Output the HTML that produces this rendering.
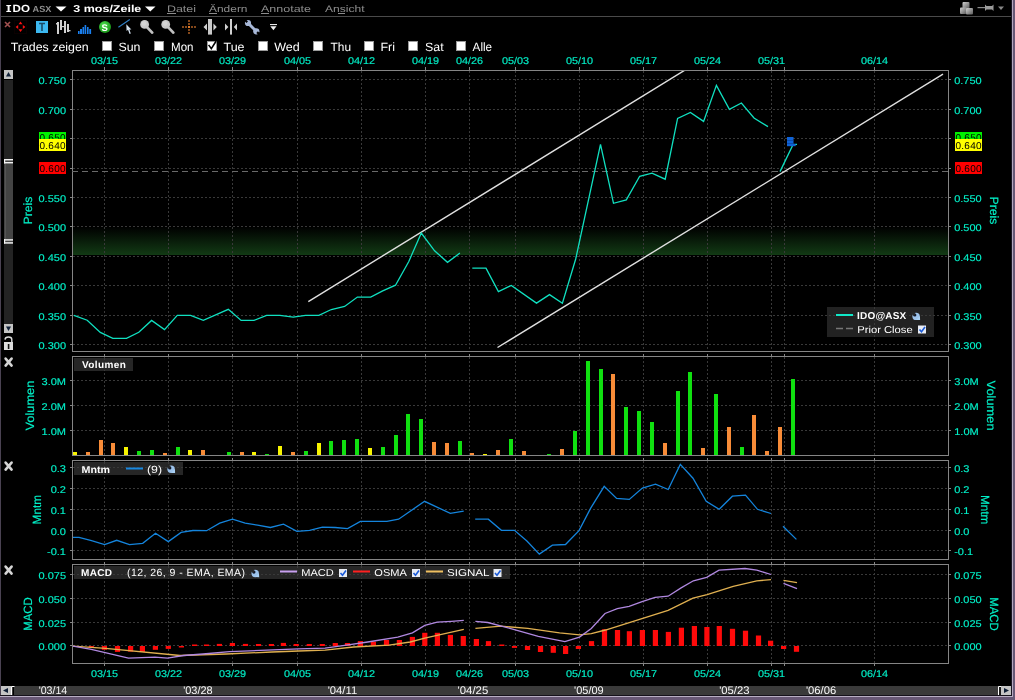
<!DOCTYPE html>
<html><head><meta charset="utf-8"><style>
html,body{margin:0;padding:0;background:#000;width:1015px;height:700px;overflow:hidden}
svg{display:block;will-change:transform}
text{font-family:"Liberation Sans",sans-serif;text-rendering:geometricPrecision}
</style></head><body>
<svg width="1015" height="700" viewBox="0 0 1015 700">
<defs>
<linearGradient id="gzone" x1="0" y1="0" x2="0" y2="1"><stop offset="0" stop-color="#000"/><stop offset="1" stop-color="#123a14"/></linearGradient>
<clipPath id="cpP"><rect x="73" y="71" width="875" height="280"/></clipPath>
<clipPath id="cpV"><rect x="73" y="357" width="875" height="98"/></clipPath>
<clipPath id="cpM"><rect x="73" y="461" width="875" height="98"/></clipPath>
<clipPath id="cpD"><rect x="73" y="565" width="875" height="98"/></clipPath>
</defs>
<rect width="1015" height="700" fill="#000"/>

<rect x="0" y="0" width="1" height="700" fill="#4a4252"/>
<rect x="1011" y="0" width="1" height="700" fill="#1c1622"/>
<rect x="1012" y="0" width="1" height="700" fill="#b4a8c0"/>
<rect x="1013" y="0" width="2" height="700" fill="#685876"/>
<rect x="0" y="695" width="1012" height="1" fill="#16121c"/><rect x="0" y="696" width="1013" height="1" fill="#b8aec4"/>
<rect x="0" y="697" width="1015" height="3" fill="#685876"/>
<rect x="1" y="16" width="1010" height="1" fill="#4a4a4a"/>
<g fill="#fff"><rect x="7.6" y="5" width="2" height="7"/><rect x="6.3" y="5" width="4.8" height="1.1"/><rect x="6.3" y="10.9" width="4.8" height="1.1"/></g>
<text x="12.6" y="12" font-size="10.4" fill="#fff" font-weight="bold" textLength="17.4" lengthAdjust="spacingAndGlyphs" >DO</text>
<text x="32.6" y="12" font-size="8.8" fill="#8e8e8e" font-weight="bold" textLength="18.8" lengthAdjust="spacingAndGlyphs" >ASX</text>
<path d="M55.5,6.5 L66.5,6.5 L61,11.5 Z" fill="#fff"/>
<text x="73.3" y="12" font-size="10" fill="#fff" font-weight="bold" textLength="68" lengthAdjust="spacingAndGlyphs" >3 mos/Zeile</text>
<path d="M145,6.5 L155.5,6.5 L150.25,11.5 Z" fill="#fff"/>
<text x="167" y="12" font-size="9.5" fill="#8c8c8c" textLength="29" lengthAdjust="spacingAndGlyphs" >Datei</text>
<text x="209" y="12" font-size="9.5" fill="#8c8c8c" textLength="38.5" lengthAdjust="spacingAndGlyphs" >Ändern</text>
<text x="261" y="12" font-size="9.5" fill="#8c8c8c" textLength="50" lengthAdjust="spacingAndGlyphs" >Annotate</text>
<text x="325" y="12" font-size="9.5" fill="#8c8c8c" textLength="39.5" lengthAdjust="spacingAndGlyphs" >Ansicht</text>
<rect x="167" y="13" width="9" height="1" fill="#8c8c8c"/>
<rect x="209" y="13" width="8" height="1" fill="#8c8c8c"/>
<rect x="261" y="13" width="8" height="1" fill="#8c8c8c"/>
<rect x="338" y="13" width="7" height="1" fill="#8c8c8c"/>
<path d="M5,22 L10,27 M10,22 L5,27" stroke="#a05050" stroke-width="1.6"/>
<g fill="#ff1010"><path d="M18.5,24.2 L20.5,21.6 L22.5,24.2 Z"/><path d="M18.5,29.3 L20.5,31.9 L22.5,29.3 Z"/><path d="M18.2,25 L15.6,27 L18.2,29 Z"/><path d="M22.8,25 L25.4,27 L22.8,29 Z"/></g>
<rect x="14.5" y="20.5" width="12" height="13" fill="none" stroke="#160303" stroke-width="1" stroke-dasharray="1 1"/>
<rect x="36" y="21" width="12" height="12" fill="#3cb8f0"/><path d="M39,23.5 H45 M42,23.5 V31" stroke="#1a4a66" stroke-width="1.6"/>
<g fill="#d0d0d0"><rect x="57" y="22" width="2" height="12"/><rect x="56" y="23" width="1" height="1.5"/><rect x="60" y="20" width="2" height="10"/><rect x="64" y="21" width="2" height="12"/><rect x="62" y="26" width="2" height="1.2"/><rect x="67" y="24" width="2" height="8"/><rect x="69" y="30" width="1.5" height="1.3"/></g>
<g fill="#1a80f0"><rect x="78" y="31" width="1.6" height="3"/><rect x="80" y="29" width="2" height="5"/><rect x="82.5" y="27" width="1.6" height="7"/><rect x="84.6" y="25" width="1.6" height="9"/><rect x="87" y="27" width="1.6" height="7"/><rect x="89.3" y="29" width="1.8" height="5"/></g>
<defs><radialGradient id="gS" cx="0.4" cy="0.35" r="0.7"><stop offset="0" stop-color="#50e050"/><stop offset="1" stop-color="#149014"/></radialGradient></defs><circle cx="105" cy="27" r="6" fill="url(#gS)"/><text x="101.6" y="30.6" font-size="9.5" font-weight="bold" fill="#fff">S</text>
<path d="M118.4,27.3 L129.8,19.5" stroke="#3080c8" stroke-width="1.1"/><path d="M126.3,24.2 L126.6,31 L128,29.8 L129.6,34 L130.8,33.4 L129.4,29.4 L131.4,29.4 Z" fill="#d4e2f0"/>
<path d="M147.2,27.4 L152.2,32.6" stroke="#c0c0c0" stroke-width="2.8" stroke-linecap="round"/><circle cx="144.6" cy="24.4" r="4.4" fill="#c8c8c8"/><circle cx="144.0" cy="23.6" r="2.4" fill="#d4d4d4"/>
<path d="M168.29999999999998,27.4 L173.29999999999998,32.6" stroke="#c0c0c0" stroke-width="2.8" stroke-linecap="round"/><circle cx="165.7" cy="24.4" r="4.4" fill="#c8c8c8"/><circle cx="165.1" cy="23.6" r="2.4" fill="#d4d4d4"/>
<g fill="#84481a"><rect x="188" y="20" width="2" height="2"/><rect x="188" y="23" width="2" height="2"/><rect x="188" y="29" width="2" height="2"/><rect x="188" y="32" width="2" height="2"/><rect x="182" y="26" width="2" height="2"/><rect x="185" y="26" width="2" height="2"/><rect x="191" y="26" width="2" height="2"/><rect x="194" y="26" width="2" height="2"/><rect x="188" y="26" width="2" height="2" fill="#e07a28"/></g>
<rect x="208" y="19" width="4" height="15.6" fill="#c8c8c8"/><path d="M203.5,27 L207,23.6 L207,30.4 Z M216.8,27 L213.4,23.6 L213.4,30.4 Z" fill="#d0d0d0"/>
<rect x="230" y="19" width="2" height="15.6" fill="#d0d0d0"/><path d="M228.4,27 L225,23.6 L225,30.4 Z M233.8,27 L237,23.6 L237,30.4 Z" fill="#d0d0d0"/>
<g><path d="M248.5,23.5 L255.8,30.8" stroke="#a8b8d8" stroke-width="3"/><circle cx="248" cy="23" r="3.1" fill="#a8b8d8"/><circle cx="256.3" cy="31.3" r="3.1" fill="#a8b8d8"/><path d="M247.2,22.2 L243.5,18.5" stroke="#000" stroke-width="2.2"/><path d="M257.1,32.1 L260.8,35.8" stroke="#000" stroke-width="2.2"/></g>
<rect x="270" y="24" width="7" height="1.1" fill="#e8e8e8"/><path d="M270.3,26.2 L276.5,26.2 L273.4,30.3 Z" fill="#f0f0f0"/>
<defs><linearGradient id="gcube" x1="0" y1="0" x2="1" y2="1"><stop offset="0" stop-color="#d0d0d0"/><stop offset="1" stop-color="#5a5a5a"/></linearGradient></defs>
<g fill="url(#gcube)"><rect x="962.5" y="2" width="7" height="6.5" rx="1"/><rect x="960" y="7.5" width="6.5" height="6.5" rx="1"/><rect x="966" y="8" width="7" height="6.5" rx="1"/></g>
<path d="M977.5,7.6 H985" stroke="#8a8a8a" stroke-width="1.2"/><path d="M985,4.5 L986.5,6 H992 L993.5,4.5 V11 L992,9.5 H986.5 L985,11 Z" fill="#9c9c9c"/>
<path d="M998,6.5 L1004,6.5 L1001,10 Z" fill="#888"/>
<text x="10.7" y="51" font-size="12" fill="#fff" textLength="78" lengthAdjust="spacingAndGlyphs" >Trades zeigen</text>
<rect x="102.5" y="41.5" width="9" height="9" fill="#fff" stroke="#9a9a9a" stroke-width="1"/>
<text x="118.5" y="51" font-size="12" fill="#fff" textLength="22" lengthAdjust="spacingAndGlyphs" >Sun</text>
<rect x="154.5" y="41.5" width="9" height="9" fill="#fff" stroke="#9a9a9a" stroke-width="1"/>
<text x="171" y="51" font-size="12" fill="#fff" textLength="22.5" lengthAdjust="spacingAndGlyphs" >Mon</text>
<rect x="207.5" y="41.5" width="9" height="9" fill="#fff" stroke="#9a9a9a" stroke-width="1"/>
<text x="223.5" y="51" font-size="12" fill="#fff" textLength="21" lengthAdjust="spacingAndGlyphs" >Tue</text>
<rect x="258.5" y="41.5" width="9" height="9" fill="#fff" stroke="#9a9a9a" stroke-width="1"/>
<text x="274.3" y="51" font-size="12" fill="#fff" textLength="25.5" lengthAdjust="spacingAndGlyphs" >Wed</text>
<rect x="313.5" y="41.5" width="9" height="9" fill="#fff" stroke="#9a9a9a" stroke-width="1"/>
<text x="330.5" y="51" font-size="12" fill="#fff" textLength="20.5" lengthAdjust="spacingAndGlyphs" >Thu</text>
<rect x="364.5" y="41.5" width="9" height="9" fill="#fff" stroke="#9a9a9a" stroke-width="1"/>
<text x="380.5" y="51" font-size="12" fill="#fff" textLength="14.5" lengthAdjust="spacingAndGlyphs" >Fri</text>
<rect x="408.5" y="41.5" width="9" height="9" fill="#fff" stroke="#9a9a9a" stroke-width="1"/>
<text x="425" y="51" font-size="12" fill="#fff" textLength="18.6" lengthAdjust="spacingAndGlyphs" >Sat</text>
<rect x="456.5" y="41.5" width="9" height="9" fill="#fff" stroke="#9a9a9a" stroke-width="1"/>
<text x="472.6" y="51" font-size="12" fill="#fff" textLength="19.5" lengthAdjust="spacingAndGlyphs" >Alle</text>
<path d="M208.6,44.9 L211.3,48.6 L216.2,41" stroke="#000" stroke-width="1.6" fill="none"/>
<text x="104.5" y="64.4" font-size="9.8" fill="#00f0c8" textLength="27.2" lengthAdjust="spacingAndGlyphs" text-anchor="middle" stroke="#00f0c8" stroke-width="0.15" stroke-linejoin="round">03/15</text>
<text x="104.5" y="677" font-size="9.8" fill="#00f0c8" textLength="27.2" lengthAdjust="spacingAndGlyphs" text-anchor="middle" stroke="#00f0c8" stroke-width="0.15" stroke-linejoin="round">03/15</text>
<text x="168.5" y="64.4" font-size="9.8" fill="#00f0c8" textLength="27.2" lengthAdjust="spacingAndGlyphs" text-anchor="middle" stroke="#00f0c8" stroke-width="0.15" stroke-linejoin="round">03/22</text>
<text x="168.5" y="677" font-size="9.8" fill="#00f0c8" textLength="27.2" lengthAdjust="spacingAndGlyphs" text-anchor="middle" stroke="#00f0c8" stroke-width="0.15" stroke-linejoin="round">03/22</text>
<text x="232.5" y="64.4" font-size="9.8" fill="#00f0c8" textLength="27.2" lengthAdjust="spacingAndGlyphs" text-anchor="middle" stroke="#00f0c8" stroke-width="0.15" stroke-linejoin="round">03/29</text>
<text x="232.5" y="677" font-size="9.8" fill="#00f0c8" textLength="27.2" lengthAdjust="spacingAndGlyphs" text-anchor="middle" stroke="#00f0c8" stroke-width="0.15" stroke-linejoin="round">03/29</text>
<text x="297.5" y="64.4" font-size="9.8" fill="#00f0c8" textLength="27.2" lengthAdjust="spacingAndGlyphs" text-anchor="middle" stroke="#00f0c8" stroke-width="0.15" stroke-linejoin="round">04/05</text>
<text x="297.5" y="677" font-size="9.8" fill="#00f0c8" textLength="27.2" lengthAdjust="spacingAndGlyphs" text-anchor="middle" stroke="#00f0c8" stroke-width="0.15" stroke-linejoin="round">04/05</text>
<text x="361.5" y="64.4" font-size="9.8" fill="#00f0c8" textLength="27.2" lengthAdjust="spacingAndGlyphs" text-anchor="middle" stroke="#00f0c8" stroke-width="0.15" stroke-linejoin="round">04/12</text>
<text x="361.5" y="677" font-size="9.8" fill="#00f0c8" textLength="27.2" lengthAdjust="spacingAndGlyphs" text-anchor="middle" stroke="#00f0c8" stroke-width="0.15" stroke-linejoin="round">04/12</text>
<text x="425.5" y="64.4" font-size="9.8" fill="#00f0c8" textLength="27.2" lengthAdjust="spacingAndGlyphs" text-anchor="middle" stroke="#00f0c8" stroke-width="0.15" stroke-linejoin="round">04/19</text>
<text x="425.5" y="677" font-size="9.8" fill="#00f0c8" textLength="27.2" lengthAdjust="spacingAndGlyphs" text-anchor="middle" stroke="#00f0c8" stroke-width="0.15" stroke-linejoin="round">04/19</text>
<text x="469.5" y="64.4" font-size="9.8" fill="#00f0c8" textLength="27.2" lengthAdjust="spacingAndGlyphs" text-anchor="middle" stroke="#00f0c8" stroke-width="0.15" stroke-linejoin="round">04/26</text>
<text x="469.5" y="677" font-size="9.8" fill="#00f0c8" textLength="27.2" lengthAdjust="spacingAndGlyphs" text-anchor="middle" stroke="#00f0c8" stroke-width="0.15" stroke-linejoin="round">04/26</text>
<text x="515.5" y="64.4" font-size="9.8" fill="#00f0c8" textLength="27.2" lengthAdjust="spacingAndGlyphs" text-anchor="middle" stroke="#00f0c8" stroke-width="0.15" stroke-linejoin="round">05/03</text>
<text x="515.5" y="677" font-size="9.8" fill="#00f0c8" textLength="27.2" lengthAdjust="spacingAndGlyphs" text-anchor="middle" stroke="#00f0c8" stroke-width="0.15" stroke-linejoin="round">05/03</text>
<text x="579.5" y="64.4" font-size="9.8" fill="#00f0c8" textLength="27.2" lengthAdjust="spacingAndGlyphs" text-anchor="middle" stroke="#00f0c8" stroke-width="0.15" stroke-linejoin="round">05/10</text>
<text x="579.5" y="677" font-size="9.8" fill="#00f0c8" textLength="27.2" lengthAdjust="spacingAndGlyphs" text-anchor="middle" stroke="#00f0c8" stroke-width="0.15" stroke-linejoin="round">05/10</text>
<text x="643.5" y="64.4" font-size="9.8" fill="#00f0c8" textLength="27.2" lengthAdjust="spacingAndGlyphs" text-anchor="middle" stroke="#00f0c8" stroke-width="0.15" stroke-linejoin="round">05/17</text>
<text x="643.5" y="677" font-size="9.8" fill="#00f0c8" textLength="27.2" lengthAdjust="spacingAndGlyphs" text-anchor="middle" stroke="#00f0c8" stroke-width="0.15" stroke-linejoin="round">05/17</text>
<text x="707.5" y="64.4" font-size="9.8" fill="#00f0c8" textLength="27.2" lengthAdjust="spacingAndGlyphs" text-anchor="middle" stroke="#00f0c8" stroke-width="0.15" stroke-linejoin="round">05/24</text>
<text x="707.5" y="677" font-size="9.8" fill="#00f0c8" textLength="27.2" lengthAdjust="spacingAndGlyphs" text-anchor="middle" stroke="#00f0c8" stroke-width="0.15" stroke-linejoin="round">05/24</text>
<text x="771.5" y="64.4" font-size="9.8" fill="#00f0c8" textLength="27.2" lengthAdjust="spacingAndGlyphs" text-anchor="middle" stroke="#00f0c8" stroke-width="0.15" stroke-linejoin="round">05/31</text>
<text x="771.5" y="677" font-size="9.8" fill="#00f0c8" textLength="27.2" lengthAdjust="spacingAndGlyphs" text-anchor="middle" stroke="#00f0c8" stroke-width="0.15" stroke-linejoin="round">05/31</text>
<text x="874.5" y="64.4" font-size="9.8" fill="#00f0c8" textLength="27.2" lengthAdjust="spacingAndGlyphs" text-anchor="middle" stroke="#00f0c8" stroke-width="0.15" stroke-linejoin="round">06/14</text>
<text x="874.5" y="677" font-size="9.8" fill="#00f0c8" textLength="27.2" lengthAdjust="spacingAndGlyphs" text-anchor="middle" stroke="#00f0c8" stroke-width="0.15" stroke-linejoin="round">06/14</text>
<rect x="73" y="227" width="875" height="28" fill="url(#gzone)"/>
<line x1="104.5" y1="71" x2="104.5" y2="351" stroke="#393939" stroke-width="1" stroke-dasharray="2 2"/>
<line x1="168.5" y1="71" x2="168.5" y2="351" stroke="#393939" stroke-width="1" stroke-dasharray="2 2"/>
<line x1="232.5" y1="71" x2="232.5" y2="351" stroke="#393939" stroke-width="1" stroke-dasharray="2 2"/>
<line x1="297.5" y1="71" x2="297.5" y2="351" stroke="#393939" stroke-width="1" stroke-dasharray="2 2"/>
<line x1="361.5" y1="71" x2="361.5" y2="351" stroke="#393939" stroke-width="1" stroke-dasharray="2 2"/>
<line x1="425.5" y1="71" x2="425.5" y2="351" stroke="#393939" stroke-width="1" stroke-dasharray="2 2"/>
<line x1="469.5" y1="71" x2="469.5" y2="351" stroke="#393939" stroke-width="1" stroke-dasharray="2 2"/>
<line x1="515.5" y1="71" x2="515.5" y2="351" stroke="#393939" stroke-width="1" stroke-dasharray="2 2"/>
<line x1="579.5" y1="71" x2="579.5" y2="351" stroke="#393939" stroke-width="1" stroke-dasharray="2 2"/>
<line x1="643.5" y1="71" x2="643.5" y2="351" stroke="#393939" stroke-width="1" stroke-dasharray="2 2"/>
<line x1="707.5" y1="71" x2="707.5" y2="351" stroke="#393939" stroke-width="1" stroke-dasharray="2 2"/>
<line x1="771.5" y1="71" x2="771.5" y2="351" stroke="#393939" stroke-width="1" stroke-dasharray="2 2"/>
<line x1="784.5" y1="71" x2="784.5" y2="351" stroke="#393939" stroke-width="1" stroke-dasharray="2 2"/>
<line x1="874.5" y1="71" x2="874.5" y2="351" stroke="#393939" stroke-width="1" stroke-dasharray="2 2"/>
<line x1="73" y1="79.5" x2="948" y2="79.5" stroke="#393939" stroke-width="1" stroke-dasharray="2 2"/>
<line x1="70" y1="79.5" x2="72" y2="79.5" stroke="#858585"/>
<line x1="949" y1="79.5" x2="951" y2="79.5" stroke="#858585"/>
<text x="66" y="84" font-size="9.8" fill="#00f0c8" textLength="27.5" lengthAdjust="spacingAndGlyphs" text-anchor="end" stroke="#00f0c8" stroke-width="0.15" stroke-linejoin="round">0.750</text>
<text x="954.2" y="84" font-size="9.8" fill="#00f0c8" textLength="27.5" lengthAdjust="spacingAndGlyphs" stroke="#00f0c8" stroke-width="0.15" stroke-linejoin="round">0.750</text>
<line x1="73" y1="109.5" x2="948" y2="109.5" stroke="#393939" stroke-width="1" stroke-dasharray="2 2"/>
<line x1="70" y1="109.5" x2="72" y2="109.5" stroke="#858585"/>
<line x1="949" y1="109.5" x2="951" y2="109.5" stroke="#858585"/>
<text x="66" y="114" font-size="9.8" fill="#00f0c8" textLength="27.5" lengthAdjust="spacingAndGlyphs" text-anchor="end" stroke="#00f0c8" stroke-width="0.15" stroke-linejoin="round">0.700</text>
<text x="954.2" y="114" font-size="9.8" fill="#00f0c8" textLength="27.5" lengthAdjust="spacingAndGlyphs" stroke="#00f0c8" stroke-width="0.15" stroke-linejoin="round">0.700</text>
<line x1="73" y1="138.5" x2="948" y2="138.5" stroke="#393939" stroke-width="1" stroke-dasharray="2 2"/>
<line x1="70" y1="138.5" x2="72" y2="138.5" stroke="#858585"/>
<line x1="949" y1="138.5" x2="951" y2="138.5" stroke="#858585"/>
<line x1="73" y1="168.5" x2="948" y2="168.5" stroke="#393939" stroke-width="1" stroke-dasharray="2 2"/>
<line x1="70" y1="168.5" x2="72" y2="168.5" stroke="#858585"/>
<line x1="949" y1="168.5" x2="951" y2="168.5" stroke="#858585"/>
<line x1="73" y1="197.5" x2="948" y2="197.5" stroke="#393939" stroke-width="1" stroke-dasharray="2 2"/>
<line x1="70" y1="197.5" x2="72" y2="197.5" stroke="#858585"/>
<line x1="949" y1="197.5" x2="951" y2="197.5" stroke="#858585"/>
<text x="66" y="202" font-size="9.8" fill="#00f0c8" textLength="27.5" lengthAdjust="spacingAndGlyphs" text-anchor="end" stroke="#00f0c8" stroke-width="0.15" stroke-linejoin="round">0.550</text>
<text x="954.2" y="202" font-size="9.8" fill="#00f0c8" textLength="27.5" lengthAdjust="spacingAndGlyphs" stroke="#00f0c8" stroke-width="0.15" stroke-linejoin="round">0.550</text>
<line x1="73" y1="226.5" x2="948" y2="226.5" stroke="#393939" stroke-width="1" stroke-dasharray="2 2"/>
<line x1="70" y1="226.5" x2="72" y2="226.5" stroke="#858585"/>
<line x1="949" y1="226.5" x2="951" y2="226.5" stroke="#858585"/>
<text x="66" y="231" font-size="9.8" fill="#00f0c8" textLength="27.5" lengthAdjust="spacingAndGlyphs" text-anchor="end" stroke="#00f0c8" stroke-width="0.15" stroke-linejoin="round">0.500</text>
<text x="954.2" y="231" font-size="9.8" fill="#00f0c8" textLength="27.5" lengthAdjust="spacingAndGlyphs" stroke="#00f0c8" stroke-width="0.15" stroke-linejoin="round">0.500</text>
<line x1="73" y1="256.5" x2="948" y2="256.5" stroke="#393939" stroke-width="1" stroke-dasharray="2 2"/>
<line x1="70" y1="256.5" x2="72" y2="256.5" stroke="#858585"/>
<line x1="949" y1="256.5" x2="951" y2="256.5" stroke="#858585"/>
<text x="66" y="261" font-size="9.8" fill="#00f0c8" textLength="27.5" lengthAdjust="spacingAndGlyphs" text-anchor="end" stroke="#00f0c8" stroke-width="0.15" stroke-linejoin="round">0.450</text>
<text x="954.2" y="261" font-size="9.8" fill="#00f0c8" textLength="27.5" lengthAdjust="spacingAndGlyphs" stroke="#00f0c8" stroke-width="0.15" stroke-linejoin="round">0.450</text>
<line x1="73" y1="285.5" x2="948" y2="285.5" stroke="#393939" stroke-width="1" stroke-dasharray="2 2"/>
<line x1="70" y1="285.5" x2="72" y2="285.5" stroke="#858585"/>
<line x1="949" y1="285.5" x2="951" y2="285.5" stroke="#858585"/>
<text x="66" y="290" font-size="9.8" fill="#00f0c8" textLength="27.5" lengthAdjust="spacingAndGlyphs" text-anchor="end" stroke="#00f0c8" stroke-width="0.15" stroke-linejoin="round">0.400</text>
<text x="954.2" y="290" font-size="9.8" fill="#00f0c8" textLength="27.5" lengthAdjust="spacingAndGlyphs" stroke="#00f0c8" stroke-width="0.15" stroke-linejoin="round">0.400</text>
<line x1="73" y1="315.5" x2="948" y2="315.5" stroke="#393939" stroke-width="1" stroke-dasharray="2 2"/>
<line x1="70" y1="315.5" x2="72" y2="315.5" stroke="#858585"/>
<line x1="949" y1="315.5" x2="951" y2="315.5" stroke="#858585"/>
<text x="66" y="320" font-size="9.8" fill="#00f0c8" textLength="27.5" lengthAdjust="spacingAndGlyphs" text-anchor="end" stroke="#00f0c8" stroke-width="0.15" stroke-linejoin="round">0.350</text>
<text x="954.2" y="320" font-size="9.8" fill="#00f0c8" textLength="27.5" lengthAdjust="spacingAndGlyphs" stroke="#00f0c8" stroke-width="0.15" stroke-linejoin="round">0.350</text>
<line x1="73" y1="344.5" x2="948" y2="344.5" stroke="#393939" stroke-width="1" stroke-dasharray="2 2"/>
<line x1="70" y1="344.5" x2="72" y2="344.5" stroke="#858585"/>
<line x1="949" y1="344.5" x2="951" y2="344.5" stroke="#858585"/>
<text x="66" y="349" font-size="9.8" fill="#00f0c8" textLength="27.5" lengthAdjust="spacingAndGlyphs" text-anchor="end" stroke="#00f0c8" stroke-width="0.15" stroke-linejoin="round">0.300</text>
<text x="954.2" y="349" font-size="9.8" fill="#00f0c8" textLength="27.5" lengthAdjust="spacingAndGlyphs" stroke="#00f0c8" stroke-width="0.15" stroke-linejoin="round">0.300</text>
<rect x="72.5" y="70.5" width="876" height="281" fill="none" stroke="#858585" stroke-width="1"/>
<line x1="104.5" y1="67" x2="104.5" y2="70" stroke="#858585"/>
<line x1="168.5" y1="67" x2="168.5" y2="70" stroke="#858585"/>
<line x1="232.5" y1="67" x2="232.5" y2="70" stroke="#858585"/>
<line x1="297.5" y1="67" x2="297.5" y2="70" stroke="#858585"/>
<line x1="361.5" y1="67" x2="361.5" y2="70" stroke="#858585"/>
<line x1="425.5" y1="67" x2="425.5" y2="70" stroke="#858585"/>
<line x1="469.5" y1="67" x2="469.5" y2="70" stroke="#858585"/>
<line x1="515.5" y1="67" x2="515.5" y2="70" stroke="#858585"/>
<line x1="579.5" y1="67" x2="579.5" y2="70" stroke="#858585"/>
<line x1="643.5" y1="67" x2="643.5" y2="70" stroke="#858585"/>
<line x1="707.5" y1="67" x2="707.5" y2="70" stroke="#858585"/>
<line x1="771.5" y1="67" x2="771.5" y2="70" stroke="#858585"/>
<line x1="784.5" y1="67" x2="784.5" y2="70" stroke="#858585"/>
<line x1="874.5" y1="67" x2="874.5" y2="70" stroke="#858585"/>
<line x1="104.5" y1="357" x2="104.5" y2="455" stroke="#393939" stroke-width="1" stroke-dasharray="2 2"/>
<line x1="168.5" y1="357" x2="168.5" y2="455" stroke="#393939" stroke-width="1" stroke-dasharray="2 2"/>
<line x1="232.5" y1="357" x2="232.5" y2="455" stroke="#393939" stroke-width="1" stroke-dasharray="2 2"/>
<line x1="297.5" y1="357" x2="297.5" y2="455" stroke="#393939" stroke-width="1" stroke-dasharray="2 2"/>
<line x1="361.5" y1="357" x2="361.5" y2="455" stroke="#393939" stroke-width="1" stroke-dasharray="2 2"/>
<line x1="425.5" y1="357" x2="425.5" y2="455" stroke="#393939" stroke-width="1" stroke-dasharray="2 2"/>
<line x1="469.5" y1="357" x2="469.5" y2="455" stroke="#393939" stroke-width="1" stroke-dasharray="2 2"/>
<line x1="515.5" y1="357" x2="515.5" y2="455" stroke="#393939" stroke-width="1" stroke-dasharray="2 2"/>
<line x1="579.5" y1="357" x2="579.5" y2="455" stroke="#393939" stroke-width="1" stroke-dasharray="2 2"/>
<line x1="643.5" y1="357" x2="643.5" y2="455" stroke="#393939" stroke-width="1" stroke-dasharray="2 2"/>
<line x1="707.5" y1="357" x2="707.5" y2="455" stroke="#393939" stroke-width="1" stroke-dasharray="2 2"/>
<line x1="771.5" y1="357" x2="771.5" y2="455" stroke="#393939" stroke-width="1" stroke-dasharray="2 2"/>
<line x1="784.5" y1="357" x2="784.5" y2="455" stroke="#393939" stroke-width="1" stroke-dasharray="2 2"/>
<line x1="874.5" y1="357" x2="874.5" y2="455" stroke="#393939" stroke-width="1" stroke-dasharray="2 2"/>
<line x1="73" y1="380.5" x2="948" y2="380.5" stroke="#393939" stroke-width="1" stroke-dasharray="2 2"/>
<line x1="70" y1="380.5" x2="72" y2="380.5" stroke="#858585"/>
<line x1="949" y1="380.5" x2="951" y2="380.5" stroke="#858585"/>
<text x="66" y="385" font-size="9.8" fill="#00f0c8" textLength="24.5" lengthAdjust="spacingAndGlyphs" text-anchor="end" stroke="#00f0c8" stroke-width="0.15" stroke-linejoin="round">3.0M</text>
<text x="954.2" y="385" font-size="9.8" fill="#00f0c8" textLength="24.5" lengthAdjust="spacingAndGlyphs" stroke="#00f0c8" stroke-width="0.15" stroke-linejoin="round">3.0M</text>
<line x1="73" y1="405.5" x2="948" y2="405.5" stroke="#393939" stroke-width="1" stroke-dasharray="2 2"/>
<line x1="70" y1="405.5" x2="72" y2="405.5" stroke="#858585"/>
<line x1="949" y1="405.5" x2="951" y2="405.5" stroke="#858585"/>
<text x="66" y="410" font-size="9.8" fill="#00f0c8" textLength="24.5" lengthAdjust="spacingAndGlyphs" text-anchor="end" stroke="#00f0c8" stroke-width="0.15" stroke-linejoin="round">2.0M</text>
<text x="954.2" y="410" font-size="9.8" fill="#00f0c8" textLength="24.5" lengthAdjust="spacingAndGlyphs" stroke="#00f0c8" stroke-width="0.15" stroke-linejoin="round">2.0M</text>
<line x1="73" y1="430.5" x2="948" y2="430.5" stroke="#393939" stroke-width="1" stroke-dasharray="2 2"/>
<line x1="70" y1="430.5" x2="72" y2="430.5" stroke="#858585"/>
<line x1="949" y1="430.5" x2="951" y2="430.5" stroke="#858585"/>
<text x="66" y="435" font-size="9.8" fill="#00f0c8" textLength="24.5" lengthAdjust="spacingAndGlyphs" text-anchor="end" stroke="#00f0c8" stroke-width="0.15" stroke-linejoin="round">1.0M</text>
<text x="954.2" y="435" font-size="9.8" fill="#00f0c8" textLength="24.5" lengthAdjust="spacingAndGlyphs" stroke="#00f0c8" stroke-width="0.15" stroke-linejoin="round">1.0M</text>
<rect x="72.5" y="356.5" width="876" height="99" fill="none" stroke="#858585" stroke-width="1"/>
<line x1="104.5" y1="354" x2="104.5" y2="356" stroke="#858585"/>
<line x1="168.5" y1="354" x2="168.5" y2="356" stroke="#858585"/>
<line x1="232.5" y1="354" x2="232.5" y2="356" stroke="#858585"/>
<line x1="297.5" y1="354" x2="297.5" y2="356" stroke="#858585"/>
<line x1="361.5" y1="354" x2="361.5" y2="356" stroke="#858585"/>
<line x1="425.5" y1="354" x2="425.5" y2="356" stroke="#858585"/>
<line x1="469.5" y1="354" x2="469.5" y2="356" stroke="#858585"/>
<line x1="515.5" y1="354" x2="515.5" y2="356" stroke="#858585"/>
<line x1="579.5" y1="354" x2="579.5" y2="356" stroke="#858585"/>
<line x1="643.5" y1="354" x2="643.5" y2="356" stroke="#858585"/>
<line x1="707.5" y1="354" x2="707.5" y2="356" stroke="#858585"/>
<line x1="771.5" y1="354" x2="771.5" y2="356" stroke="#858585"/>
<line x1="784.5" y1="354" x2="784.5" y2="356" stroke="#858585"/>
<line x1="874.5" y1="354" x2="874.5" y2="356" stroke="#858585"/>
<line x1="104.5" y1="461" x2="104.5" y2="559" stroke="#393939" stroke-width="1" stroke-dasharray="2 2"/>
<line x1="168.5" y1="461" x2="168.5" y2="559" stroke="#393939" stroke-width="1" stroke-dasharray="2 2"/>
<line x1="232.5" y1="461" x2="232.5" y2="559" stroke="#393939" stroke-width="1" stroke-dasharray="2 2"/>
<line x1="297.5" y1="461" x2="297.5" y2="559" stroke="#393939" stroke-width="1" stroke-dasharray="2 2"/>
<line x1="361.5" y1="461" x2="361.5" y2="559" stroke="#393939" stroke-width="1" stroke-dasharray="2 2"/>
<line x1="425.5" y1="461" x2="425.5" y2="559" stroke="#393939" stroke-width="1" stroke-dasharray="2 2"/>
<line x1="469.5" y1="461" x2="469.5" y2="559" stroke="#393939" stroke-width="1" stroke-dasharray="2 2"/>
<line x1="515.5" y1="461" x2="515.5" y2="559" stroke="#393939" stroke-width="1" stroke-dasharray="2 2"/>
<line x1="579.5" y1="461" x2="579.5" y2="559" stroke="#393939" stroke-width="1" stroke-dasharray="2 2"/>
<line x1="643.5" y1="461" x2="643.5" y2="559" stroke="#393939" stroke-width="1" stroke-dasharray="2 2"/>
<line x1="707.5" y1="461" x2="707.5" y2="559" stroke="#393939" stroke-width="1" stroke-dasharray="2 2"/>
<line x1="771.5" y1="461" x2="771.5" y2="559" stroke="#393939" stroke-width="1" stroke-dasharray="2 2"/>
<line x1="784.5" y1="461" x2="784.5" y2="559" stroke="#393939" stroke-width="1" stroke-dasharray="2 2"/>
<line x1="874.5" y1="461" x2="874.5" y2="559" stroke="#393939" stroke-width="1" stroke-dasharray="2 2"/>
<line x1="73" y1="467.5" x2="948" y2="467.5" stroke="#393939" stroke-width="1" stroke-dasharray="2 2"/>
<line x1="70" y1="467.5" x2="72" y2="467.5" stroke="#858585"/>
<line x1="949" y1="467.5" x2="951" y2="467.5" stroke="#858585"/>
<text x="66" y="472" font-size="9.8" fill="#00f0c8" textLength="15.3" lengthAdjust="spacingAndGlyphs" text-anchor="end" stroke="#00f0c8" stroke-width="0.15" stroke-linejoin="round">0.3</text>
<text x="954.2" y="472" font-size="9.8" fill="#00f0c8" textLength="15.3" lengthAdjust="spacingAndGlyphs" stroke="#00f0c8" stroke-width="0.15" stroke-linejoin="round">0.3</text>
<line x1="73" y1="488.5" x2="948" y2="488.5" stroke="#393939" stroke-width="1" stroke-dasharray="2 2"/>
<line x1="70" y1="488.5" x2="72" y2="488.5" stroke="#858585"/>
<line x1="949" y1="488.5" x2="951" y2="488.5" stroke="#858585"/>
<text x="66" y="493" font-size="9.8" fill="#00f0c8" textLength="15.3" lengthAdjust="spacingAndGlyphs" text-anchor="end" stroke="#00f0c8" stroke-width="0.15" stroke-linejoin="round">0.2</text>
<text x="954.2" y="493" font-size="9.8" fill="#00f0c8" textLength="15.3" lengthAdjust="spacingAndGlyphs" stroke="#00f0c8" stroke-width="0.15" stroke-linejoin="round">0.2</text>
<line x1="73" y1="509.5" x2="948" y2="509.5" stroke="#393939" stroke-width="1" stroke-dasharray="2 2"/>
<line x1="70" y1="509.5" x2="72" y2="509.5" stroke="#858585"/>
<line x1="949" y1="509.5" x2="951" y2="509.5" stroke="#858585"/>
<text x="66" y="514" font-size="9.8" fill="#00f0c8" textLength="15.3" lengthAdjust="spacingAndGlyphs" text-anchor="end" stroke="#00f0c8" stroke-width="0.15" stroke-linejoin="round">0.1</text>
<text x="954.2" y="514" font-size="9.8" fill="#00f0c8" textLength="15.3" lengthAdjust="spacingAndGlyphs" stroke="#00f0c8" stroke-width="0.15" stroke-linejoin="round">0.1</text>
<line x1="73" y1="530.5" x2="948" y2="530.5" stroke="#393939" stroke-width="1" stroke-dasharray="2 2"/>
<line x1="70" y1="530.5" x2="72" y2="530.5" stroke="#858585"/>
<line x1="949" y1="530.5" x2="951" y2="530.5" stroke="#858585"/>
<text x="66" y="535" font-size="9.8" fill="#00f0c8" textLength="15.3" lengthAdjust="spacingAndGlyphs" text-anchor="end" stroke="#00f0c8" stroke-width="0.15" stroke-linejoin="round">0.0</text>
<text x="954.2" y="535" font-size="9.8" fill="#00f0c8" textLength="15.3" lengthAdjust="spacingAndGlyphs" stroke="#00f0c8" stroke-width="0.15" stroke-linejoin="round">0.0</text>
<line x1="73" y1="550.5" x2="948" y2="550.5" stroke="#393939" stroke-width="1" stroke-dasharray="2 2"/>
<line x1="70" y1="550.5" x2="72" y2="550.5" stroke="#858585"/>
<line x1="949" y1="550.5" x2="951" y2="550.5" stroke="#858585"/>
<text x="66" y="555" font-size="9.8" fill="#00f0c8" textLength="19.0" lengthAdjust="spacingAndGlyphs" text-anchor="end" stroke="#00f0c8" stroke-width="0.15" stroke-linejoin="round">-0.1</text>
<text x="954.2" y="555" font-size="9.8" fill="#00f0c8" textLength="19.0" lengthAdjust="spacingAndGlyphs" stroke="#00f0c8" stroke-width="0.15" stroke-linejoin="round">-0.1</text>
<rect x="72.5" y="460.5" width="876" height="99" fill="none" stroke="#858585" stroke-width="1"/>
<line x1="104.5" y1="458" x2="104.5" y2="460" stroke="#858585"/>
<line x1="168.5" y1="458" x2="168.5" y2="460" stroke="#858585"/>
<line x1="232.5" y1="458" x2="232.5" y2="460" stroke="#858585"/>
<line x1="297.5" y1="458" x2="297.5" y2="460" stroke="#858585"/>
<line x1="361.5" y1="458" x2="361.5" y2="460" stroke="#858585"/>
<line x1="425.5" y1="458" x2="425.5" y2="460" stroke="#858585"/>
<line x1="469.5" y1="458" x2="469.5" y2="460" stroke="#858585"/>
<line x1="515.5" y1="458" x2="515.5" y2="460" stroke="#858585"/>
<line x1="579.5" y1="458" x2="579.5" y2="460" stroke="#858585"/>
<line x1="643.5" y1="458" x2="643.5" y2="460" stroke="#858585"/>
<line x1="707.5" y1="458" x2="707.5" y2="460" stroke="#858585"/>
<line x1="771.5" y1="458" x2="771.5" y2="460" stroke="#858585"/>
<line x1="784.5" y1="458" x2="784.5" y2="460" stroke="#858585"/>
<line x1="874.5" y1="458" x2="874.5" y2="460" stroke="#858585"/>
<line x1="104.5" y1="565" x2="104.5" y2="663" stroke="#393939" stroke-width="1" stroke-dasharray="2 2"/>
<line x1="168.5" y1="565" x2="168.5" y2="663" stroke="#393939" stroke-width="1" stroke-dasharray="2 2"/>
<line x1="232.5" y1="565" x2="232.5" y2="663" stroke="#393939" stroke-width="1" stroke-dasharray="2 2"/>
<line x1="297.5" y1="565" x2="297.5" y2="663" stroke="#393939" stroke-width="1" stroke-dasharray="2 2"/>
<line x1="361.5" y1="565" x2="361.5" y2="663" stroke="#393939" stroke-width="1" stroke-dasharray="2 2"/>
<line x1="425.5" y1="565" x2="425.5" y2="663" stroke="#393939" stroke-width="1" stroke-dasharray="2 2"/>
<line x1="469.5" y1="565" x2="469.5" y2="663" stroke="#393939" stroke-width="1" stroke-dasharray="2 2"/>
<line x1="515.5" y1="565" x2="515.5" y2="663" stroke="#393939" stroke-width="1" stroke-dasharray="2 2"/>
<line x1="579.5" y1="565" x2="579.5" y2="663" stroke="#393939" stroke-width="1" stroke-dasharray="2 2"/>
<line x1="643.5" y1="565" x2="643.5" y2="663" stroke="#393939" stroke-width="1" stroke-dasharray="2 2"/>
<line x1="707.5" y1="565" x2="707.5" y2="663" stroke="#393939" stroke-width="1" stroke-dasharray="2 2"/>
<line x1="771.5" y1="565" x2="771.5" y2="663" stroke="#393939" stroke-width="1" stroke-dasharray="2 2"/>
<line x1="784.5" y1="565" x2="784.5" y2="663" stroke="#393939" stroke-width="1" stroke-dasharray="2 2"/>
<line x1="874.5" y1="565" x2="874.5" y2="663" stroke="#393939" stroke-width="1" stroke-dasharray="2 2"/>
<line x1="73" y1="574.5" x2="948" y2="574.5" stroke="#393939" stroke-width="1" stroke-dasharray="2 2"/>
<line x1="70" y1="574.5" x2="72" y2="574.5" stroke="#858585"/>
<line x1="949" y1="574.5" x2="951" y2="574.5" stroke="#858585"/>
<text x="66" y="579" font-size="9.8" fill="#00f0c8" textLength="27.5" lengthAdjust="spacingAndGlyphs" text-anchor="end" stroke="#00f0c8" stroke-width="0.15" stroke-linejoin="round">0.075</text>
<text x="954.2" y="579" font-size="9.8" fill="#00f0c8" textLength="27.5" lengthAdjust="spacingAndGlyphs" stroke="#00f0c8" stroke-width="0.15" stroke-linejoin="round">0.075</text>
<line x1="73" y1="598.5" x2="948" y2="598.5" stroke="#393939" stroke-width="1" stroke-dasharray="2 2"/>
<line x1="70" y1="598.5" x2="72" y2="598.5" stroke="#858585"/>
<line x1="949" y1="598.5" x2="951" y2="598.5" stroke="#858585"/>
<text x="66" y="603" font-size="9.8" fill="#00f0c8" textLength="27.5" lengthAdjust="spacingAndGlyphs" text-anchor="end" stroke="#00f0c8" stroke-width="0.15" stroke-linejoin="round">0.050</text>
<text x="954.2" y="603" font-size="9.8" fill="#00f0c8" textLength="27.5" lengthAdjust="spacingAndGlyphs" stroke="#00f0c8" stroke-width="0.15" stroke-linejoin="round">0.050</text>
<line x1="73" y1="622.5" x2="948" y2="622.5" stroke="#393939" stroke-width="1" stroke-dasharray="2 2"/>
<line x1="70" y1="622.5" x2="72" y2="622.5" stroke="#858585"/>
<line x1="949" y1="622.5" x2="951" y2="622.5" stroke="#858585"/>
<text x="66" y="627" font-size="9.8" fill="#00f0c8" textLength="27.5" lengthAdjust="spacingAndGlyphs" text-anchor="end" stroke="#00f0c8" stroke-width="0.15" stroke-linejoin="round">0.025</text>
<text x="954.2" y="627" font-size="9.8" fill="#00f0c8" textLength="27.5" lengthAdjust="spacingAndGlyphs" stroke="#00f0c8" stroke-width="0.15" stroke-linejoin="round">0.025</text>
<line x1="73" y1="645.5" x2="948" y2="645.5" stroke="#393939" stroke-width="1" stroke-dasharray="2 2"/>
<line x1="70" y1="645.5" x2="72" y2="645.5" stroke="#858585"/>
<line x1="949" y1="645.5" x2="951" y2="645.5" stroke="#858585"/>
<text x="66" y="650" font-size="9.8" fill="#00f0c8" textLength="27.5" lengthAdjust="spacingAndGlyphs" text-anchor="end" stroke="#00f0c8" stroke-width="0.15" stroke-linejoin="round">0.000</text>
<text x="954.2" y="650" font-size="9.8" fill="#00f0c8" textLength="27.5" lengthAdjust="spacingAndGlyphs" stroke="#00f0c8" stroke-width="0.15" stroke-linejoin="round">0.000</text>
<rect x="72.5" y="564.5" width="876" height="99" fill="none" stroke="#858585" stroke-width="1"/>
<line x1="104.5" y1="562" x2="104.5" y2="564" stroke="#858585"/>
<line x1="168.5" y1="562" x2="168.5" y2="564" stroke="#858585"/>
<line x1="232.5" y1="562" x2="232.5" y2="564" stroke="#858585"/>
<line x1="297.5" y1="562" x2="297.5" y2="564" stroke="#858585"/>
<line x1="361.5" y1="562" x2="361.5" y2="564" stroke="#858585"/>
<line x1="425.5" y1="562" x2="425.5" y2="564" stroke="#858585"/>
<line x1="469.5" y1="562" x2="469.5" y2="564" stroke="#858585"/>
<line x1="515.5" y1="562" x2="515.5" y2="564" stroke="#858585"/>
<line x1="579.5" y1="562" x2="579.5" y2="564" stroke="#858585"/>
<line x1="643.5" y1="562" x2="643.5" y2="564" stroke="#858585"/>
<line x1="707.5" y1="562" x2="707.5" y2="564" stroke="#858585"/>
<line x1="771.5" y1="562" x2="771.5" y2="564" stroke="#858585"/>
<line x1="784.5" y1="562" x2="784.5" y2="564" stroke="#858585"/>
<line x1="874.5" y1="562" x2="874.5" y2="564" stroke="#858585"/>
<line x1="104.5" y1="663" x2="104.5" y2="666" stroke="#858585"/>
<line x1="168.5" y1="663" x2="168.5" y2="666" stroke="#858585"/>
<line x1="232.5" y1="663" x2="232.5" y2="666" stroke="#858585"/>
<line x1="297.5" y1="663" x2="297.5" y2="666" stroke="#858585"/>
<line x1="361.5" y1="663" x2="361.5" y2="666" stroke="#858585"/>
<line x1="425.5" y1="663" x2="425.5" y2="666" stroke="#858585"/>
<line x1="469.5" y1="663" x2="469.5" y2="666" stroke="#858585"/>
<line x1="515.5" y1="663" x2="515.5" y2="666" stroke="#858585"/>
<line x1="579.5" y1="663" x2="579.5" y2="666" stroke="#858585"/>
<line x1="643.5" y1="663" x2="643.5" y2="666" stroke="#858585"/>
<line x1="707.5" y1="663" x2="707.5" y2="666" stroke="#858585"/>
<line x1="771.5" y1="663" x2="771.5" y2="666" stroke="#858585"/>
<line x1="784.5" y1="663" x2="784.5" y2="666" stroke="#858585"/>
<line x1="874.5" y1="663" x2="874.5" y2="666" stroke="#858585"/>
<line x1="72" y1="171.5" x2="948" y2="171.5" stroke="#6a6a6a" stroke-width="1" stroke-dasharray="6 4"/>
<rect x="39" y="132" width="27" height="7" fill="#00f000"/>
<text x="39.5" y="141" font-size="10" fill="#000" letter-spacing="0.25">0.650</text>
<rect x="39" y="139" width="27" height="12" fill="#ffff00"/>
<text x="39.5" y="148.5" font-size="10" fill="#000" letter-spacing="0.25">0.640</text>
<rect x="39" y="162" width="27" height="12" fill="#ff0000"/>
<text x="39.5" y="171.5" font-size="10" fill="#000" letter-spacing="0.25">0.600</text>
<rect x="955" y="132" width="27" height="7" fill="#00f000"/>
<text x="955.5" y="141" font-size="10" fill="#000" letter-spacing="0.25">0.650</text>
<rect x="955" y="139" width="27" height="12" fill="#ffff00"/>
<text x="955.5" y="148.5" font-size="10" fill="#000" letter-spacing="0.25">0.640</text>
<rect x="955" y="162" width="27" height="12" fill="#ff0000"/>
<text x="955.5" y="171.5" font-size="10" fill="#000" letter-spacing="0.25">0.600</text>
<text transform="translate(31.5,210.5) rotate(-90)" font-size="12" fill="#00f0c8" text-anchor="middle" textLength="28" lengthAdjust="spacingAndGlyphs" stroke="#00f0c8" stroke-width="0.15" stroke-linejoin="round">Preis</text>
<text transform="translate(989.5,210.5) rotate(90)" font-size="12" fill="#00f0c8" text-anchor="middle" textLength="28" lengthAdjust="spacingAndGlyphs" stroke="#00f0c8" stroke-width="0.15" stroke-linejoin="round">Preis</text>
<text transform="translate(34,405.6) rotate(-90)" font-size="12" fill="#00f0c8" text-anchor="middle" textLength="50" lengthAdjust="spacingAndGlyphs" stroke="#00f0c8" stroke-width="0.15" stroke-linejoin="round">Volumen</text>
<text transform="translate(987,405.6) rotate(90)" font-size="12" fill="#00f0c8" text-anchor="middle" textLength="50" lengthAdjust="spacingAndGlyphs" stroke="#00f0c8" stroke-width="0.15" stroke-linejoin="round">Volumen</text>
<text transform="translate(40.5,509.7) rotate(-90)" font-size="12" fill="#00f0c8" text-anchor="middle" textLength="29.5" lengthAdjust="spacingAndGlyphs" stroke="#00f0c8" stroke-width="0.15" stroke-linejoin="round">Mntm</text>
<text transform="translate(980.5,509.7) rotate(90)" font-size="12" fill="#00f0c8" text-anchor="middle" textLength="29.5" lengthAdjust="spacingAndGlyphs" stroke="#00f0c8" stroke-width="0.15" stroke-linejoin="round">Mntm</text>
<text transform="translate(31.5,614) rotate(-90)" font-size="12" fill="#00f0c8" text-anchor="middle" textLength="33.5" lengthAdjust="spacingAndGlyphs" stroke="#00f0c8" stroke-width="0.15" stroke-linejoin="round">MACD</text>
<text transform="translate(989.5,614) rotate(90)" font-size="12" fill="#00f0c8" text-anchor="middle" textLength="33.5" lengthAdjust="spacingAndGlyphs" stroke="#00f0c8" stroke-width="0.15" stroke-linejoin="round">MACD</text>
<g clip-path="url(#cpP)"><line x1="308.3" y1="301.6" x2="690" y2="67" stroke="#e0e0e0" stroke-width="1.4"/><line x1="497.5" y1="347.5" x2="943" y2="74.2" stroke="#e0e0e0" stroke-width="1.4"/></g>
<g clip-path="url(#cpP)" fill="none" stroke="#10e0c0" stroke-width="1.3" stroke-linejoin="miter">
<polyline points="73.9,315.3 87.2,320.2 100.3,332.4 112.8,338.4 126.5,338.4 138.8,332.3 151.6,320.4 164.5,329.6 177.3,315.4 190.6,315.4 203.3,320.4 228.3,309.3 241.1,320.4 254.0,320.4 266.6,315.4 279.9,315.4 293.2,317.2 305.6,315.4 318.9,315.4 331.3,309.5 344.6,306.5 357.4,297.1 370.7,297.1 382.7,290.9 395.5,285.2 408.8,261.5 421.3,233.0 434.6,250.8 447.5,262.3 459.9,253.1"/>
<polyline points="472.3,268.2 486.0,268.2 498.4,291.6 511.3,285.4 536.5,303.1 549.5,294.6 562.4,303.2 575.7,259.0 600.5,144.4 613.5,203.3 626.3,199.9 639.7,176.3 652.0,173.2 665.2,179.2 677.6,118.4 690.4,112.4 703.6,121.4 716.4,85.4 729.4,109.4 741.4,103.0 754.0,118.0 768.0,126.6"/>
<polyline points="780.0,171.6 793.0,144.6 797.0,144.4"/>
</g>
<g fill="#0f62d6"><rect x="787" y="137" width="6.5" height="7"/><rect x="787" y="143.8" width="8.6" height="2.4"/></g><g fill="#0a3c8c"><rect x="787" y="140" width="6.5" height="0.6"/><rect x="787" y="143.2" width="6.5" height="0.6"/></g>
<rect x="827" y="307" width="107" height="30" fill="#222"/>
<line x1="827" y1="315.5" x2="934" y2="315.5" stroke="#393939" stroke-dasharray="2 2" stroke-dashoffset="2"/>
<line x1="874.5" y1="307" x2="874.5" y2="337" stroke="#393939" stroke-dasharray="2 2"/>
<line x1="836" y1="315" x2="853" y2="315" stroke="#10e8c8" stroke-width="2"/>
<text x="857" y="319" font-size="10" font-weight="bold" fill="#fff" letter-spacing="0.2">IDO@ASX</text>
<g><circle cx="916.1" cy="316.40000000000003" r="3.7" fill="#9cc2ea"/><path d="M916.1,320.0 L920.1,320.1 L919.9,316.1 Z" fill="#a8d0f4"/><circle cx="914.8000000000001" cy="315.0" r="1.6" fill="#0c1428"/><path d="M914.8000000000001,315.0 L911.6,311.8" stroke="#262626" stroke-width="2.6"/></g>
<line x1="836" y1="328.5" x2="853" y2="328.5" stroke="#777" stroke-width="1.5" stroke-dasharray="7 3"/>
<text x="857.2" y="333" font-size="10" fill="#fff" textLength="55.5" lengthAdjust="spacingAndGlyphs">Prior Close</text>
<rect x="918" y="325.5" width="8" height="8" fill="#e8ecf4"/><path d="M919.5,329.5 L921.5,331.7 L925,327.0" stroke="#1a5ad8" stroke-width="1.6" fill="none"/>
<g clip-path="url(#cpV)">
<rect x="73" y="452" width="4" height="3" fill="#f8f400"/>
<rect x="86" y="452" width="4" height="3" fill="#f88c38"/>
<rect x="99" y="440" width="4" height="15" fill="#f88c38"/>
<rect x="111" y="443" width="4" height="12" fill="#f88c38"/>
<rect x="124" y="447" width="4" height="8" fill="#f8f400"/>
<rect x="137" y="451" width="4" height="4" fill="#10e010"/>
<rect x="150" y="450" width="4" height="5" fill="#10e010"/>
<rect x="163" y="453" width="4" height="2" fill="#f88c38"/>
<rect x="176" y="447" width="4" height="8" fill="#10e010"/>
<rect x="188" y="450" width="4" height="5" fill="#f8f400"/>
<rect x="201" y="450" width="4" height="5" fill="#f88c38"/>
<rect x="227" y="452" width="4" height="3" fill="#10e010"/>
<rect x="240" y="452" width="4" height="3" fill="#f88c38"/>
<rect x="252" y="452" width="4" height="3" fill="#f8f400"/>
<rect x="265" y="454" width="4" height="1" fill="#10e010"/>
<rect x="278" y="446" width="4" height="9" fill="#f8f400"/>
<rect x="291" y="452" width="4" height="3" fill="#f88c38"/>
<rect x="304" y="451" width="4" height="4" fill="#10e010"/>
<rect x="317" y="443" width="4" height="12" fill="#f8f400"/>
<rect x="329" y="441" width="4" height="14" fill="#10e010"/>
<rect x="342" y="440" width="4" height="15" fill="#10e010"/>
<rect x="355" y="439" width="4" height="16" fill="#10e010"/>
<rect x="368" y="448" width="4" height="7" fill="#f8f400"/>
<rect x="381" y="447" width="4" height="8" fill="#10e010"/>
<rect x="394" y="435" width="4" height="20" fill="#10e010"/>
<rect x="406" y="414" width="4" height="41" fill="#10e010"/>
<rect x="419" y="419" width="4" height="36" fill="#10e010"/>
<rect x="432" y="442" width="4" height="13" fill="#f88c38"/>
<rect x="445" y="443" width="4" height="12" fill="#f88c38"/>
<rect x="458" y="441" width="4" height="14" fill="#10e010"/>
<rect x="470" y="453" width="4" height="2" fill="#f88c38"/>
<rect x="483" y="454" width="4" height="1" fill="#f8f400"/>
<rect x="496" y="450" width="4" height="5" fill="#f88c38"/>
<rect x="509" y="439" width="4" height="16" fill="#10e010"/>
<rect x="522" y="451" width="4" height="4" fill="#f88c38"/>
<rect x="547" y="454" width="4" height="1" fill="#10e010"/>
<rect x="560" y="449" width="4" height="6" fill="#f88c38"/>
<rect x="573" y="431" width="4" height="24" fill="#10e010"/>
<rect x="586" y="361" width="4" height="94" fill="#10e010"/>
<rect x="599" y="369" width="4" height="86" fill="#10e010"/>
<rect x="611" y="374" width="4" height="81" fill="#f88c38"/>
<rect x="624" y="407" width="4" height="48" fill="#10e010"/>
<rect x="637" y="411" width="4" height="44" fill="#10e010"/>
<rect x="650" y="422" width="4" height="33" fill="#10e010"/>
<rect x="663" y="443" width="4" height="12" fill="#f88c38"/>
<rect x="676" y="391" width="4" height="64" fill="#10e010"/>
<rect x="688" y="372" width="4" height="83" fill="#10e010"/>
<rect x="701" y="448" width="4" height="7" fill="#f88c38"/>
<rect x="714" y="394" width="4" height="61" fill="#10e010"/>
<rect x="727" y="427" width="4" height="28" fill="#f88c38"/>
<rect x="740" y="447" width="4" height="8" fill="#10e010"/>
<rect x="752" y="415" width="4" height="40" fill="#f88c38"/>
<rect x="765" y="451" width="4" height="4" fill="#f88c38"/>
<rect x="778" y="427" width="4" height="28" fill="#f88c38"/>
<rect x="791" y="379" width="4" height="76" fill="#10e010"/>
</g>
<rect x="74" y="358" width="59" height="13" fill="#262626"/>
<line x1="104.5" y1="358" x2="104.5" y2="371" stroke="#393939" stroke-dasharray="2 2"/>
<text x="82" y="368" font-size="10" font-weight="bold" fill="#fff" letter-spacing="0.4">Volumen</text>
<g clip-path="url(#cpM)" fill="none" stroke="#1484dc" stroke-width="1.3">
<polyline points="66.0,537.4 79.0,537.4 91.5,540.7 104.6,544.6 116.7,540.3 129.5,544.6 142.7,543.3 155.5,533.3 168.3,541.6 181.1,532.4 192.9,530.5 206.6,530.7 219.7,523.1 232.5,519.2 245.2,523.1 257.6,525.2 270.4,527.5 283.5,524.2 296.9,531.4 309.7,530.4 322.4,527.2 335.2,527.5 347.6,528.6 360.4,521.4 373.8,521.4 386.9,521.4 398.6,519.2 424.6,501.3 450.3,513.4 463.7,511.1"/>
<polyline points="475.2,519.2 488.3,519.2 501.4,530.3 514.5,530.3 526.9,541.0 539.3,554.1 552.4,545.2 565.5,544.5 579.0,530.6 590.7,508.1 604.2,486.4 616.6,498.4 629.3,499.4 642.4,488.1 655.5,484.2 668.2,489.5 680.3,464.4 693.0,478.2 706.2,501.2 719.2,509.3 732.4,496.2 745.5,495.2 757.5,509.3 771.0,513.5"/>
<polyline points="783.0,526.2 796.4,539.4"/>
</g>
<rect x="74" y="462" width="109" height="13" fill="#262626"/>
<line x1="74" y1="467.5" x2="183" y2="467.5" stroke="#393939" stroke-dasharray="2 2" stroke-dashoffset="1"/>
<line x1="104.5" y1="462" x2="104.5" y2="475" stroke="#393939" stroke-dasharray="2 2"/>
<line x1="168.5" y1="462" x2="168.5" y2="475" stroke="#393939" stroke-dasharray="2 2"/>
<text x="81.5" y="473" font-size="10" font-weight="bold" fill="#fff" textLength="28.5" lengthAdjust="spacingAndGlyphs">Mntm</text>
<line x1="126" y1="468.5" x2="143" y2="468.5" stroke="#1888e0" stroke-width="2"/><text x="147" y="473" font-size="10.5" fill="#fff" textLength="15" lengthAdjust="spacingAndGlyphs">(9)</text>
<g><circle cx="171.1" cy="469.3" r="3.7" fill="#9cc2ea"/><path d="M171.1,472.9 L175.1,473 L174.9,469 Z" fill="#a8d0f4"/><circle cx="169.79999999999998" cy="467.9" r="1.6" fill="#0c1428"/><path d="M169.79999999999998,467.9 L166.6,464.7" stroke="#262626" stroke-width="2.6"/></g>
<g clip-path="url(#cpD)">
<rect x="88.7" y="646.0" width="5.2" height="1.5" fill="#ff0a0a"/>
<rect x="101.8" y="646.0" width="5.2" height="3.8" fill="#ff0a0a"/>
<rect x="114.9" y="646.0" width="5.2" height="5.9" fill="#ff0a0a"/>
<rect x="128.0" y="646.0" width="5.2" height="5.6" fill="#ff0a0a"/>
<rect x="139.8" y="646.0" width="5.2" height="5.9" fill="#ff0a0a"/>
<rect x="152.8" y="646.0" width="5.2" height="3.8" fill="#ff0a0a"/>
<rect x="165.7" y="646.0" width="5.2" height="2.9" fill="#ff0a0a"/>
<rect x="178.8" y="646.0" width="5.2" height="1.5" fill="#ff0a0a"/>
<rect x="192.0" y="644.5" width="5.2" height="1.5" fill="#ff0a0a"/>
<rect x="203.9" y="644.5" width="5.2" height="1.5" fill="#ff0a0a"/>
<rect x="216.8" y="643.9" width="5.2" height="2.1" fill="#ff0a0a"/>
<rect x="229.8" y="643.0" width="5.2" height="3.0" fill="#ff0a0a"/>
<rect x="242.9" y="643.9" width="5.2" height="2.1" fill="#ff0a0a"/>
<rect x="255.9" y="644.0" width="5.2" height="2.0" fill="#ff0a0a"/>
<rect x="268.8" y="644.0" width="5.2" height="2.0" fill="#ff0a0a"/>
<rect x="280.8" y="642.9" width="5.2" height="3.1" fill="#ff0a0a"/>
<rect x="293.6" y="644.0" width="5.2" height="2.0" fill="#ff0a0a"/>
<rect x="306.7" y="644.0" width="5.2" height="2.0" fill="#ff0a0a"/>
<rect x="319.7" y="644.0" width="5.2" height="2.0" fill="#ff0a0a"/>
<rect x="332.7" y="643.0" width="5.2" height="3.0" fill="#ff0a0a"/>
<rect x="344.9" y="643.0" width="5.2" height="3.0" fill="#ff0a0a"/>
<rect x="357.8" y="641.1" width="5.2" height="4.9" fill="#ff0a0a"/>
<rect x="370.8" y="641.7" width="5.2" height="4.3" fill="#ff0a0a"/>
<rect x="383.9" y="640.0" width="5.2" height="6.0" fill="#ff0a0a"/>
<rect x="396.8" y="640.0" width="5.2" height="6.0" fill="#ff0a0a"/>
<rect x="409.8" y="636.9" width="5.2" height="9.1" fill="#ff0a0a"/>
<rect x="422.2" y="632.8" width="5.2" height="13.2" fill="#ff0a0a"/>
<rect x="434.8" y="632.8" width="5.2" height="13.2" fill="#ff0a0a"/>
<rect x="447.8" y="634.9" width="5.2" height="11.1" fill="#ff0a0a"/>
<rect x="460.7" y="636.0" width="5.2" height="10.0" fill="#ff0a0a"/>
<rect x="473.8" y="639.0" width="5.2" height="7.0" fill="#ff0a0a"/>
<rect x="485.9" y="641.1" width="5.2" height="4.9" fill="#ff0a0a"/>
<rect x="499.2" y="644.5" width="5.2" height="1.5" fill="#ff0a0a"/>
<rect x="511.9" y="646.0" width="5.2" height="1.9" fill="#ff0a0a"/>
<rect x="524.9" y="646.0" width="5.2" height="4.0" fill="#ff0a0a"/>
<rect x="537.9" y="646.0" width="5.2" height="6.0" fill="#ff0a0a"/>
<rect x="550.7" y="646.0" width="5.2" height="6.8" fill="#ff0a0a"/>
<rect x="563.0" y="646.0" width="5.2" height="8.0" fill="#ff0a0a"/>
<rect x="575.8" y="646.0" width="5.2" height="3.0" fill="#ff0a0a"/>
<rect x="588.9" y="641.1" width="5.2" height="4.9" fill="#ff0a0a"/>
<rect x="601.9" y="629.3" width="5.2" height="16.7" fill="#ff0a0a"/>
<rect x="614.9" y="630.0" width="5.2" height="16.0" fill="#ff0a0a"/>
<rect x="626.8" y="631.2" width="5.2" height="14.8" fill="#ff0a0a"/>
<rect x="639.8" y="630.0" width="5.2" height="16.0" fill="#ff0a0a"/>
<rect x="652.8" y="630.0" width="5.2" height="16.0" fill="#ff0a0a"/>
<rect x="665.8" y="631.9" width="5.2" height="14.1" fill="#ff0a0a"/>
<rect x="678.8" y="627.7" width="5.2" height="18.3" fill="#ff0a0a"/>
<rect x="691.8" y="626.0" width="5.2" height="20.0" fill="#ff0a0a"/>
<rect x="704.3" y="627.0" width="5.2" height="19.0" fill="#ff0a0a"/>
<rect x="716.7" y="626.0" width="5.2" height="20.0" fill="#ff0a0a"/>
<rect x="729.9" y="628.8" width="5.2" height="17.2" fill="#ff0a0a"/>
<rect x="742.9" y="630.7" width="5.2" height="15.3" fill="#ff0a0a"/>
<rect x="755.9" y="635.5" width="5.2" height="10.5" fill="#ff0a0a"/>
<rect x="768.0" y="640.7" width="5.2" height="5.3" fill="#ff0a0a"/>
<rect x="781.0" y="646.0" width="5.2" height="3.0" fill="#ff0a0a"/>
<rect x="793.9" y="646.0" width="5.2" height="5.8" fill="#ff0a0a"/>
<g fill="none" stroke-width="1.3">
<polyline points="72.5,646.0 105.5,648.4 180.0,655.5 226.0,654.0 271.9,652.0 298.5,651.0 325.1,650.2 353.5,647.0 389.0,645.2 410.2,642.0 424.8,638.1 463.8,629.3" stroke="#e0b050"/>
<polyline points="475.4,628.4 501.0,626.2 527.7,628.4 559.6,632.8 579.5,634.8 591.3,633.6 605.5,630.0 668.1,610.4 693.0,598.1 707.1,594.6 733.2,586.3 756.8,580.8 771.0,579.7" stroke="#e0b050"/>
<polyline points="783.5,580.4 797.0,582.7" stroke="#e0b050"/>
<polyline points="72.5,646.0 91.3,649.3 128.5,658.1 155.0,657.2 167.5,658.1 183.5,655.5 203.0,654.0 229.6,651.6 298.5,648.8 325.1,648.2 346.4,645.2 367.7,642.0 397.8,637.2 412.4,632.8 424.8,625.4 437.2,622.2 451.4,621.3 463.8,620.4" stroke="#b088e0"/>
<polyline points="475.4,621.3 487.8,622.5 513.5,629.3 538.3,636.3 564.9,641.7 579.5,637.1 591.3,628.4 605.0,613.5 617.3,608.7 629.1,606.4 642.1,601.7 655.1,597.4 668.1,596.2 681.1,587.9 693.4,580.8 706.7,577.3 719.0,570.2 745.0,568.5 756.8,570.2 771.0,574.5" stroke="#b088e0"/>
<polyline points="783.5,583.4 797.0,588.6" stroke="#b088e0"/>
</g></g>
<rect x="74" y="566" width="436" height="13" fill="#262626"/>
<line x1="74" y1="574.5" x2="510" y2="574.5" stroke="#393939" stroke-dasharray="2 2" stroke-dashoffset="1"/>
<line x1="104.5" y1="566" x2="104.5" y2="579" stroke="#393939" stroke-dasharray="2 2"/>
<line x1="168.5" y1="566" x2="168.5" y2="579" stroke="#393939" stroke-dasharray="2 2"/>
<line x1="232.5" y1="566" x2="232.5" y2="579" stroke="#393939" stroke-dasharray="2 2"/>
<line x1="297.5" y1="566" x2="297.5" y2="579" stroke="#393939" stroke-dasharray="2 2"/>
<line x1="361.5" y1="566" x2="361.5" y2="579" stroke="#393939" stroke-dasharray="2 2"/>
<line x1="425.5" y1="566" x2="425.5" y2="579" stroke="#393939" stroke-dasharray="2 2"/>
<line x1="469.5" y1="566" x2="469.5" y2="579" stroke="#393939" stroke-dasharray="2 2"/>
<text x="81" y="576" font-size="10" font-weight="bold" fill="#fff" letter-spacing="0.3">MACD</text>
<text x="127" y="576" font-size="10.5" fill="#fff" letter-spacing="0.45">(12, 26, 9 - EMA, EMA)</text>
<g><circle cx="255.2" cy="573.5" r="3.7" fill="#9cc2ea"/><path d="M255.2,577.1 L259.2,577.2 L259.0,573.2 Z" fill="#a8d0f4"/><circle cx="253.89999999999998" cy="572.1" r="1.6" fill="#0c1428"/><path d="M253.89999999999998,572.1 L250.7,568.9000000000001" stroke="#262626" stroke-width="2.6"/></g>
<line x1="280" y1="571.5" x2="297" y2="571.5" stroke="#c8a0f0" stroke-width="2"/><text x="301.2" y="576" font-size="10" fill="#fff" textLength="32.5" lengthAdjust="spacingAndGlyphs">MACD</text>
<rect x="339" y="569" width="8" height="8" fill="#e8ecf4"/><path d="M340.5,573 L342.5,575.2 L346,570.5" stroke="#1a5ad8" stroke-width="1.6" fill="none"/>
<line x1="353" y1="571.5" x2="370" y2="571.5" stroke="#ff2020" stroke-width="2"/><text x="374.3" y="576" font-size="10" fill="#fff" textLength="32.5" lengthAdjust="spacingAndGlyphs">OSMA</text>
<rect x="412" y="569" width="8" height="8" fill="#e8ecf4"/><path d="M413.5,573 L415.5,575.2 L419,570.5" stroke="#1a5ad8" stroke-width="1.6" fill="none"/>
<line x1="426" y1="571.5" x2="443" y2="571.5" stroke="#f0c060" stroke-width="2"/><text x="447" y="576" font-size="10" fill="#fff" textLength="42.5" lengthAdjust="spacingAndGlyphs">SIGNAL</text>
<rect x="493.5" y="569" width="8" height="8" fill="#e8ecf4"/><path d="M495.0,573 L497.0,575.2 L500.5,570.5" stroke="#1a5ad8" stroke-width="1.6" fill="none"/>
<rect x="4" y="80" width="9" height="244" fill="#232323"/>
<rect x="4" y="70" width="9" height="9" fill="#c4c4c4"/><path d="M8.5,72 L11,76.5 L6,76.5 Z" fill="#102038"/>
<rect x="4" y="159" width="9" height="85" fill="#444"/><rect x="5" y="163" width="1" height="76" fill="#555"/>
<g fill="#f4f4f4"><rect x="4" y="159" width="9" height="1.4"/><rect x="4" y="162" width="9" height="1.4"/><rect x="4" y="159" width="1.2" height="4.4"/><rect x="4" y="239.2" width="9" height="1.4"/><rect x="4" y="242.2" width="9" height="1.4"/><rect x="4" y="239.2" width="1.2" height="4.4"/></g>
<rect x="4" y="324" width="9" height="9" fill="#c4c4c4"/><path d="M6,326.5 L11,326.5 L8.5,331 Z" fill="#102038"/>
<path d="M5,339.6 Q5.2,337 8.5,337 Q11.8,337 11.8,339.5 V342" stroke="#ddd" stroke-width="1.4" fill="none"/><rect x="4" y="342" width="9" height="8" fill="#ddd"/><rect x="7.8" y="344" width="1.6" height="5" fill="#111"/>
<path d="M5.6,358.6 L11.6,365.6 M11.6,358.6 L5.6,365.6" stroke="#d4d4d4" stroke-width="2.6" stroke-linecap="round"/>
<path d="M5.6,462.6 L11.6,469.6 M11.6,462.6 L5.6,469.6" stroke="#d4d4d4" stroke-width="2.6" stroke-linecap="round"/>
<path d="M5.6,566.6 L11.6,573.6 M11.6,566.6 L5.6,573.6" stroke="#d4d4d4" stroke-width="2.6" stroke-linecap="round"/>
<rect x="1" y="686" width="1010" height="9" fill="#3a3a3a"/>
<rect x="1" y="686" width="10" height="9" fill="#c4c4c4"/><path d="M3,690.5 L8,688 L8,693 Z" fill="#102038"/>
<path d="M11.5,695 V686.5 H14.5" stroke="#fff" fill="none"/><rect x="13" y="687" width="1" height="8" fill="#000"/>
<rect x="1001" y="686" width="10" height="9" fill="#c4c4c4"/><path d="M1009,690.5 L1004,688 L1004,693 Z" fill="#102038"/>
<path d="M998.5,695 V686.5 H1001" stroke="#fff" fill="none"/><rect x="999.5" y="687" width="1" height="8" fill="#000"/>
<text x="38.7" y="694" font-size="11" fill="#f8f8f8" textLength="28.6" lengthAdjust="spacingAndGlyphs" >'03/14</text>
<text x="183.2" y="694" font-size="11" fill="#f8f8f8" textLength="29.5" lengthAdjust="spacingAndGlyphs" >'03/28</text>
<text x="327.7" y="694" font-size="11" fill="#f8f8f8" textLength="29.5" lengthAdjust="spacingAndGlyphs" >'04/11</text>
<text x="457.59999999999997" y="694" font-size="11" fill="#f8f8f8" textLength="30.7" lengthAdjust="spacingAndGlyphs" >'04/25</text>
<text x="574.1" y="694" font-size="11" fill="#f8f8f8" textLength="29.6" lengthAdjust="spacingAndGlyphs" >'05/09</text>
<text x="719.2" y="694" font-size="11" fill="#f8f8f8" textLength="30.3" lengthAdjust="spacingAndGlyphs" >'05/23</text>
<text x="805.9000000000001" y="694" font-size="11" fill="#f8f8f8" textLength="30.3" lengthAdjust="spacingAndGlyphs" >'06/06</text>
</svg></body></html>
